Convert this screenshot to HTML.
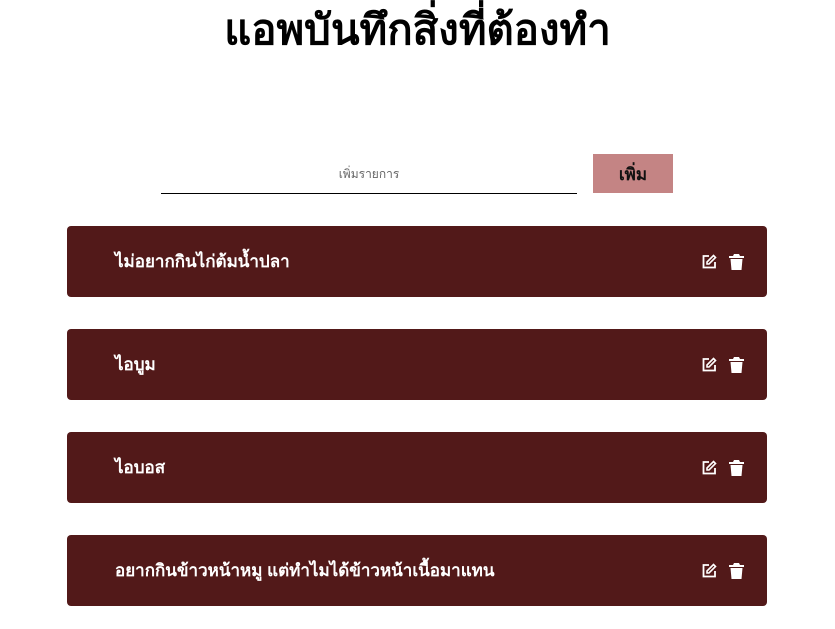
<!DOCTYPE html>
<html><head><meta charset="utf-8"><style>
body{margin:0;width:835px;height:629px;background:#fff;font-family:"Liberation Sans",sans-serif;position:relative;overflow:hidden}
h1{position:absolute;top:4px;left:0;width:835px;margin:0;text-align:center;font-size:42px;font-weight:bold;color:#000;line-height:52px}
.inp{position:absolute;left:161px;top:155px;width:416px;height:38px;border-bottom:1.5px solid #000;text-align:center;line-height:38px;font-size:12px;color:#666}
.btn{position:absolute;left:593px;top:154px;width:80px;height:39px;background:#c48484;text-align:center;line-height:41px;font-size:17px;font-weight:bold;color:#111}
.card{position:absolute;left:67px;width:700px;height:71px;background:#521919;border-radius:4px;color:#fff;font-size:17px;font-weight:bold}
.card span{position:absolute;left:48px;top:0;line-height:72px}
.ic{position:absolute;top:28px}
</style></head><body>
<h1>แอพบันทึกสิ่งที่ต้องทำ</h1>
<div class="inp">เพิ่มรายการ</div>
<div class="btn">เพิ่ม</div>
<div class="card" style="top:226px"><span>ไม่อยากกินไก่ต้มน้ำปลา</span>
<svg class="ic" style="left:634px" width="16" height="16" viewBox="0 0 16 16"><path d="M8 2H2.5v11.5H14V8" fill="none" stroke="#fff" stroke-width="1.8"/><path d="M12.5 1.5l2 2L8 10H6V8z" fill="none" stroke="#fff" stroke-width="1.6"/></svg>
<svg class="ic" style="left:662px" width="15" height="16" viewBox="0 0 15 16"><path d="M5 0h5l1 2h4v2H0V2h4z M1.5 5h12l-1 11h-10z" fill="#fff"/></svg></div>
<div class="card" style="top:329px"><span>ไอบูม</span>
<svg class="ic" style="left:634px" width="16" height="16" viewBox="0 0 16 16"><path d="M8 2H2.5v11.5H14V8" fill="none" stroke="#fff" stroke-width="1.8"/><path d="M12.5 1.5l2 2L8 10H6V8z" fill="none" stroke="#fff" stroke-width="1.6"/></svg>
<svg class="ic" style="left:662px" width="15" height="16" viewBox="0 0 15 16"><path d="M5 0h5l1 2h4v2H0V2h4z M1.5 5h12l-1 11h-10z" fill="#fff"/></svg></div>
<div class="card" style="top:432px"><span>ไอบอส</span>
<svg class="ic" style="left:634px" width="16" height="16" viewBox="0 0 16 16"><path d="M8 2H2.5v11.5H14V8" fill="none" stroke="#fff" stroke-width="1.8"/><path d="M12.5 1.5l2 2L8 10H6V8z" fill="none" stroke="#fff" stroke-width="1.6"/></svg>
<svg class="ic" style="left:662px" width="15" height="16" viewBox="0 0 15 16"><path d="M5 0h5l1 2h4v2H0V2h4z M1.5 5h12l-1 11h-10z" fill="#fff"/></svg></div>
<div class="card" style="top:535px"><span>อยากกินข้าวหน้าหมู แต่ทำไมได้ข้าวหน้าเนื้อมาแทน</span>
<svg class="ic" style="left:634px" width="16" height="16" viewBox="0 0 16 16"><path d="M8 2H2.5v11.5H14V8" fill="none" stroke="#fff" stroke-width="1.8"/><path d="M12.5 1.5l2 2L8 10H6V8z" fill="none" stroke="#fff" stroke-width="1.6"/></svg>
<svg class="ic" style="left:662px" width="15" height="16" viewBox="0 0 15 16"><path d="M5 0h5l1 2h4v2H0V2h4z M1.5 5h12l-1 11h-10z" fill="#fff"/></svg></div>
</body></html>
